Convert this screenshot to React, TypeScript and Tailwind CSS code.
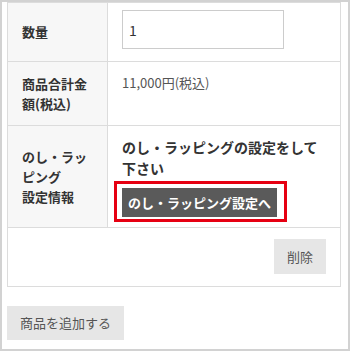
export default function App() {
  return (
    <div className="w-[350px] h-[351px] border-2 border-[#d2d2d2] bg-white font-['Noto_Sans_CJK_JP','Noto_Sans',sans-serif] text-[#333]">
      {/* Cart item table */}
      <div className="ml-[5px] mr-[7px] border border-[#dcdcdc]">
        <div className="flex border-b border-[#dcdcdc]">
          <div className="w-[100px] shrink-0 bg-[#f7f7f7] border-r border-[#dcdcdc] pl-[14px] flex items-center text-[13px] font-bold">
            数量
          </div>
          <div className="flex-1 pl-[14px] pt-[7px] pb-[12px]">
            <input
              type="text"
              defaultValue="1"
              className="w-[162px] h-[39px] border border-[#cccccc] px-[6px] text-[14px] text-[#333] outline-none"
            />
          </div>
        </div>

        <div className="flex border-b border-[#dcdcdc]">
          <div className="w-[100px] shrink-0 bg-[#f7f7f7] border-r border-[#dcdcdc] pl-[14px] py-3 text-[13px] leading-[19.5px] font-bold">
            商品合計金
            <br />
            額(税込)
          </div>
          <div className="flex-1 pl-[14px] pt-[11px] text-[13px] leading-[20px] text-[#555]">
            11,000円(税込)
          </div>
        </div>

        <div className="flex border-b border-[#dcdcdc]">
          <div className="w-[100px] shrink-0 bg-[#f7f7f7] border-r border-[#dcdcdc] pl-[14px] flex items-center text-[13px] leading-[20px] font-bold">
            <div>
              のし・ラッ
              <br />
              ピング
              <br />
              設定情報
            </div>
          </div>
          <div className="flex-1 pl-[14px] pt-[11px] pb-[5px]">
            <p className="text-[14px] leading-[21px] font-bold">
              のし・ラッピングの設定をして
              <br />
              下さい
            </p>
            <div className="inline-block mt-[2px] ml-[-8px] border-[3px] border-[#e60012] pt-[4px] pb-[2px] pl-[5px] pr-[7px]">
              <button className="block bg-[#5a5a5a] text-white text-[13px] font-bold leading-[29px] px-[6px] whitespace-nowrap">
                のし・ラッピング設定へ
              </button>
            </div>
          </div>
        </div>

        <div className="flex justify-end pt-[11px] pb-[12px] pr-[14px]">
          <button className="bg-[#e6e6e6] text-[#555] text-[13px] leading-[35px] px-[13px]">削除</button>
        </div>
      </div>

      <div className="ml-[5px] mt-[19px]">
        <button className="bg-[#e6e6e6] text-[#555] text-[13px] leading-[34px] px-[13px]">商品を追加する</button>
      </div>
    </div>
  );
}
